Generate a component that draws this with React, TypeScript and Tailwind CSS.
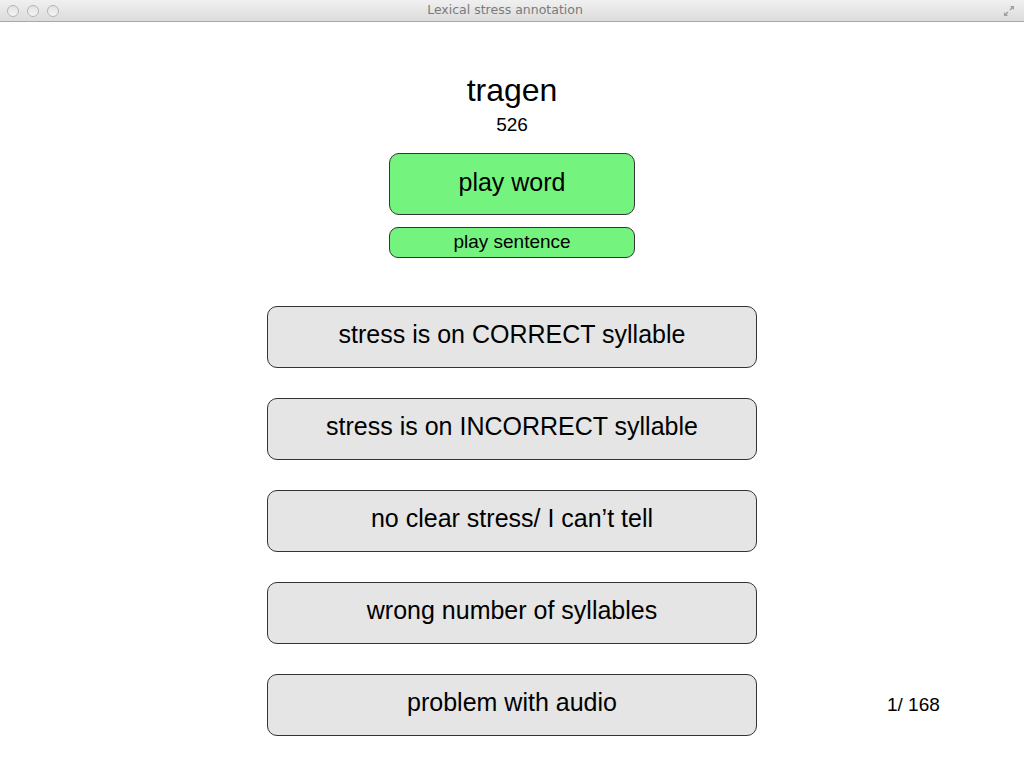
import React from "react";

const font = { fontFamily: '"Liberation Sans", Arial, sans-serif' };

function Choice({ label }: { label: string }) {
  return (
    <button className="w-[490px] h-[62px] rounded-[10px] border border-[#333] bg-[#e5e5e5] text-[25px] leading-[30px] text-black flex items-center justify-center pb-[6px]">
      {label}
    </button>
  );
}

export default function App() {
  return (
    <div className="w-[1024px] h-[774px] bg-white flex flex-col overflow-hidden" style={font}>
      <div className="h-[22px] shrink-0 border-b border-[#a8a8a8] bg-gradient-to-b from-[#f0f0f0] to-[#dcdcdc] flex items-center px-[7px] relative">
        <div className="flex gap-[8px]">
          <span className="w-[12px] h-[12px] rounded-full border border-[#b5b5b5] bg-gradient-to-b from-[#e2e2e2] to-[#f4f4f4]" />
          <span className="w-[12px] h-[12px] rounded-full border border-[#b5b5b5] bg-gradient-to-b from-[#e2e2e2] to-[#f4f4f4]" />
          <span className="w-[12px] h-[12px] rounded-full border border-[#b5b5b5] bg-gradient-to-b from-[#e2e2e2] to-[#f4f4f4]" />
        </div>
        <div className="flex-1 text-center text-[#7a7a7a] -ml-[52px]" style={{ fontFamily: '"Lucida Grande", "DejaVu Sans", sans-serif', fontSize: 12.5 }}>
          Lexical stress annotation
        </div>
        <svg width="12" height="12" viewBox="0 0 12 12" className="mr-[2px]">
          <path d="M7 1 H11 V5 L9.6 3.6 L7.6 5.6 L6.4 4.4 L8.4 2.4 Z" fill="#a0a0a0" />
          <path d="M5 11 H1 V7 L2.4 8.4 L4.4 6.4 L5.6 7.6 L3.6 9.6 Z" fill="#a0a0a0" />
        </svg>
      </div>

      <div className="flex flex-col items-center">
        <div className="mt-[50px] text-[32px] leading-[36px] text-black">tragen</div>
        <div className="mt-[5px] text-[19px] leading-[24px] text-black">526</div>
        <button className="mt-[16px] w-[246px] h-[62px] rounded-[10px] border border-[#333] bg-[#75f37f] text-[25px] leading-[30px] text-black flex items-center justify-center pb-[4px]">
          play word
        </button>
        <button className="mt-[12px] w-[246px] h-[31px] rounded-[9px] border border-[#333] bg-[#75f37f] text-[19px] leading-[22px] text-black flex items-center justify-center pb-[2px]">
          play sentence
        </button>

        <div className="mt-[48px] flex flex-col gap-[30px] w-full">
          <div className="grid grid-cols-[1fr_490px_1fr]">
            <div />
            <Choice label="stress is on CORRECT syllable" />
            <div />
          </div>
          <div className="grid grid-cols-[1fr_490px_1fr]">
            <div />
            <Choice label="stress is on INCORRECT syllable" />
            <div />
          </div>
          <div className="grid grid-cols-[1fr_490px_1fr]">
            <div />
            <Choice label="no clear stress/ I can’t tell" />
            <div />
          </div>
          <div className="grid grid-cols-[1fr_490px_1fr]">
            <div />
            <Choice label="wrong number of syllables" />
            <div />
          </div>
          <div className="grid grid-cols-[1fr_490px_1fr] items-center">
            <div />
            <Choice label="problem with audio" />
            <div className="pl-[130px] text-[19px] leading-[24px] text-black">1/ 168</div>
          </div>
        </div>
      </div>
    </div>
  );
}
